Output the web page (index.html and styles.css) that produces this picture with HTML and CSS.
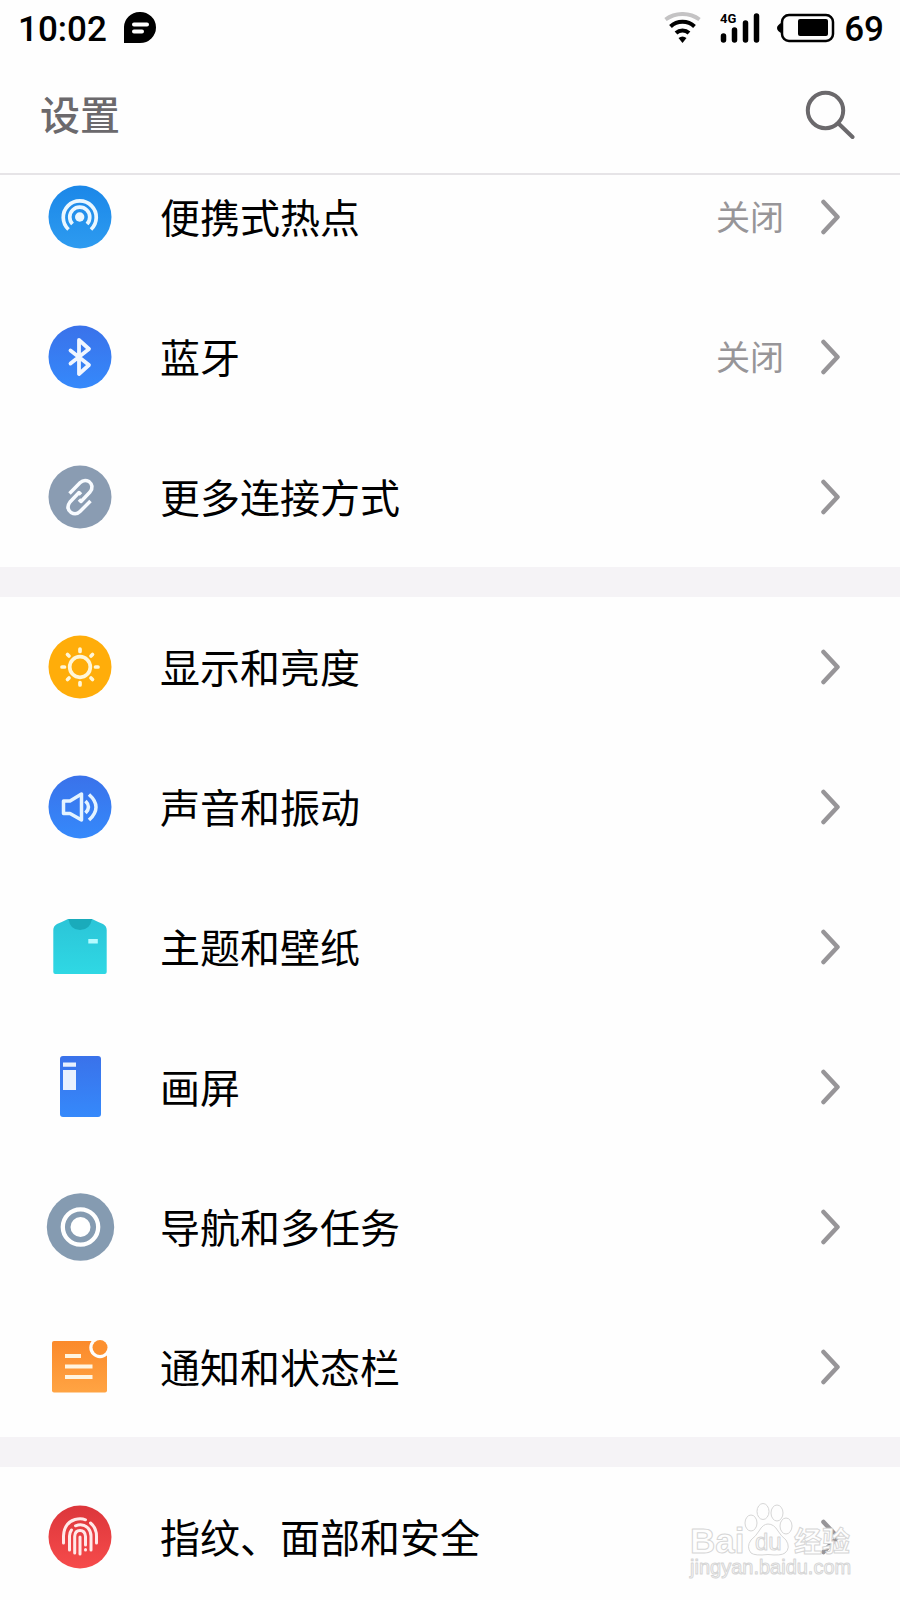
FILE: index.html
```html
<!DOCTYPE html>
<html lang="zh-CN">
<head>
    <meta charset="UTF-8">
    <meta name="viewport" content="width=device-width, initial-scale=1.0">
    <title>设置</title>
    <link rel="stylesheet" href="styles.css">
</head>
<body>

    <header class="header">
        <div class="status-bar">
            <span class="clock">10:02</span>
            <svg class="bubble" width="32" height="32" viewBox="0 0 32 32" aria-hidden="true">
                <path d="M0 31V16A16 15.500 0 1 1 16 31Z"/>
                <path d="M10 12.500h13M10 19.500h8" fill="none" stroke="#fff" stroke-width="4" stroke-linecap="round"/>
            </svg>
            <div class="status-icons">
                <svg width="38" height="32" viewBox="0 0 38 32" fill="none" stroke="#000" stroke-width="4" aria-hidden="true">
                    <path d="M1.500 7.500A29 29 0 0 1 35.500 7.500" stroke="#c4c3c4"/>
                    <path d="M6.500 14.500A17.500 17.500 0 0 1 30.500 14.500"/>
                    <path d="M12 21A9.500 9.500 0 0 1 25 21"/>
                    <path d="M14.500 26Q18.500 23 22.500 26L18.500 31Z" fill="#000" stroke="none"/>
                </svg>
                <svg class="signal" width="40" height="32" viewBox="0 0 40 32" aria-hidden="true">
                    <text class="network" x="0" y="11">4G</text>
                    <path d="M3.500 24v4M14.500 18v10M25.500 11v17M36.500 4v24" stroke="#000" stroke-width="5.500" stroke-linecap="round"/>
                </svg>
                <svg class="battery" width="58" height="32" viewBox="0 0 58 32" aria-hidden="true">
                    <path d="M5 10.500Q0 13 0 16t5 5.500Z"/>
                    <rect x="5" y="3" width="51" height="26" rx="7" fill="none" stroke="#000" stroke-width="2.500"/>
                    <rect x="21" y="7" width="30" height="17" rx="2"/>
                </svg>
                <span class="level">69</span>
            </div>
        </div>
        <div class="title-bar">
            <h1>设置</h1>
            <button class="search" type="button" aria-label="搜索">
                <svg width="50" height="50" viewBox="0 0 50 50" fill="none" stroke="#6b696c" stroke-width="4" stroke-linecap="round">
                    <circle cx="20.500" cy="20.500" r="17.700"/>
                    <path d="M34 34L47.500 47"/>
                </svg>
            </button>
        </div>
    </header>

    <!-- 图标共用的渐变和箭头 -->
    <svg class="defs" width="0" height="0" aria-hidden="true">
        <defs>
            <linearGradient id="sky" x2="0" y2="1"><stop stop-color="#1b87e8"/><stop offset="1" stop-color="#2d9bf0"/></linearGradient>
            <linearGradient id="blue" x2="0" y2="1"><stop stop-color="#3a72ea"/><stop offset="1" stop-color="#3589fb"/></linearGradient>
            <linearGradient id="teal" x2="0" y2="1"><stop stop-color="#2bc5d8"/><stop offset="1" stop-color="#2fd8e4"/></linearGradient>
            <linearGradient id="orange" x2="0" y2="1"><stop stop-color="#fb8a2b"/><stop offset="1" stop-color="#ffa443"/></linearGradient>
            <linearGradient id="red" x2="0" y2="1"><stop stop-color="#dc363b"/><stop offset="1" stop-color="#f64b4b"/></linearGradient>
            <symbol id="arrow" viewBox="0 0 20 36"><path d="M3.500 3L17.500 18L3.500 33" fill="none" stroke="#979598" stroke-width="4.500" stroke-linecap="round" stroke-linejoin="round"/></symbol>
        </defs>
    </svg>

    <main class="settings">
        <nav class="group">
            <a class="row" href="#hotspot">
                <svg class="icon" viewBox="0 0 64 64">
                    <circle cx="32" cy="32" r="31.500" fill="url(#sky)"/>
                    <g fill="none" stroke="#eaf7ff" stroke-width="3.700">
                        <path d="M20.500 44.500A16.500 16.500 0 1 1 43 44.500"/>
                        <path d="M24.500 39A10 10 0 1 1 39 39"/>
                    </g>
                    <circle cx="31.700" cy="32" r="4.700" fill="#eaf7ff"/>
                </svg>
                <span class="name">便携式热点</span>
                <span class="value">关闭</span>
                <svg class="arrow"><use href="#arrow"/></svg>
            </a>
            <a class="row" href="#bluetooth">
                <svg class="icon" viewBox="0 0 64 64">
                    <circle cx="32" cy="32" r="31.500" fill="url(#blue)"/>
                    <path d="M22.500 25.500L41 40L31 49V15L41 24L22.500 38.500" fill="none" stroke="#f0f6ff" stroke-width="3.800" stroke-linecap="round" stroke-linejoin="round"/>
                </svg>
                <span class="name">蓝牙</span>
                <span class="value">关闭</span>
                <svg class="arrow"><use href="#arrow"/></svg>
            </a>
            <a class="row" href="#connections">
                <svg class="icon" viewBox="0 0 64 64">
                    <circle cx="32" cy="32" r="31.500" fill="#8a9cb2"/>
                    <g fill="none" stroke="#f8fbff" stroke-width="3.500" stroke-linejoin="round">
                        <path d="M21.500 28.500L32 17.800Q36 13.800 41 16.500Q46.500 21 42 27L33 36.500L31 34.500"/>
                        <path d="M42.500 36L32 46.500Q28 50.500 23 47.500Q17.500 43 22 37L31 27.500L33 29.500"/>
                    </g>
                </svg>
                <span class="name">更多连接方式</span>
                <svg class="arrow"><use href="#arrow"/></svg>
            </a>
        </nav>

        <nav class="group">
            <a class="row" href="#display">
                <svg class="icon" viewBox="0 0 64 64">
                    <circle cx="32" cy="32" r="31.500" fill="#ffad0a"/>
                    <g fill="none" stroke="#fff6d8" stroke-width="3.700" stroke-linecap="round">
                        <circle cx="32" cy="32" r="10.300"/>
                        <path d="M32 14v2.500M32 47.500V50M14 32h2.500M47.500 32H50M19.500 19.500l1.500 1.500M43 43l1.500 1.500M19.500 44.500l1.500-1.500M43 21l1.500-1.500"/>
                    </g>
                </svg>
                <span class="name">显示和亮度</span>
                <svg class="arrow"><use href="#arrow"/></svg>
            </a>
            <a class="row" href="#sound">
                <svg class="icon" viewBox="0 0 64 64">
                    <circle cx="32" cy="32" r="31.500" fill="url(#blue)"/>
                    <g fill="none" stroke="#e4f3ff" stroke-width="3.500" stroke-linejoin="round">
                        <path d="M15.500 26H22L33.500 19V45L22 38.500H15.500Z"/>
                        <path d="M37.500 26Q43.500 32 37.500 38"/>
                        <path d="M41 19.500Q55 32 41 45"/>
                    </g>
                </svg>
                <span class="name">声音和振动</span>
                <svg class="arrow"><use href="#arrow"/></svg>
            </a>
            <a class="row" href="#theme">
                <svg class="icon" viewBox="0 0 64 64">
                    <path d="M20 4H44Q50 7 55 9Q58.700 11 58.700 15V57Q58.700 59 56.700 59H7.300Q5.300 59 5.300 57V15Q5.300 11 9 9Q14 7 20 4Z" fill="url(#teal)"/>
                    <path d="M20.500 4H44Q42 15 32 15T20.500 4Z" fill="#1aabbb"/>
                    <rect x="40.300" y="24" width="9.500" height="4.500" fill="#b4fbff"/>
                </svg>
                <span class="name">主题和壁纸</span>
                <svg class="arrow"><use href="#arrow"/></svg>
            </a>
            <a class="row" href="#screen">
                <svg class="icon" viewBox="0 0 64 64">
                    <rect x="12" y="1" width="41" height="61" rx="3" fill="url(#blue)"/>
                    <path d="M15 7.500H28V11.700H15ZM15 15H28V35H15Z" fill="#e8f1fe"/>
                </svg>
                <span class="name">画屏</span>
                <svg class="arrow"><use href="#arrow"/></svg>
            </a>
            <a class="row" href="#navigation">
                <svg class="icon" viewBox="0 0 64 64">
                    <circle cx="32.500" cy="32" r="33.700" fill="#859bb1"/>
                    <circle cx="32.500" cy="32" r="17.700" fill="none" stroke="#fff" stroke-width="4.300"/>
                    <circle cx="32.500" cy="32" r="10" fill="#fff"/>
                </svg>
                <span class="name">导航和多任务</span>
                <svg class="arrow"><use href="#arrow"/></svg>
            </a>
            <a class="row" href="#notifications">
                <svg class="icon" viewBox="0 0 64 64">
                    <rect x="4" y="6" width="55" height="51.500" rx="2" fill="url(#orange)"/>
                    <circle cx="52" cy="12.500" r="10.700" fill="#fefefe"/>
                    <circle cx="52" cy="12.500" r="7.500" fill="#fc902f"/>
                    <path d="M17 21H33M17 31.500H44.500M17 42H44.500" stroke="#fff4df" stroke-width="4"/>
                </svg>
                <span class="name">通知和状态栏</span>
                <svg class="arrow"><use href="#arrow"/></svg>
            </a>
        </nav>

        <nav class="group">
            <a class="row" href="#security">
                <svg class="icon" viewBox="0 0 64 64">
                    <circle cx="32" cy="32" r="31.500" fill="url(#red)"/>
                    <g fill="none" stroke="#ffe9e9" stroke-width="3" stroke-linecap="round">
                        <path d="M15.500 38V31Q16 18 27 14.500Q33 13 37.500 14.800"/>
                        <path d="M42.500 18Q48.500 23 48.500 31V38"/>
                        <path d="M21.500 45V31Q21.500 27.500 23.500 25"/>
                        <path d="M27.500 20.800Q35 18 40 23Q43 26.500 43 31V45"/>
                        <path d="M26.700 48V31.500Q27 25.500 32 25.500T37.500 31.500V40M37.500 44.500V45"/>
                        <path d="M32 32V49"/>
                    </g>
                </svg>
                <span class="name">指纹、面部和安全</span>
                <svg class="arrow"><use href="#arrow"/></svg>
            </a>
        </nav>
    </main>

    <svg class="watermark" width="166" height="84" viewBox="0 0 166 84" aria-hidden="true">
        <g class="outline">
            <text class="brand" x="2" y="55">Bai</text>
            <ellipse cx="63" cy="25" rx="6" ry="8"/>
            <ellipse cx="75" cy="13.500" rx="6" ry="8"/>
            <ellipse cx="89" cy="15" rx="6" ry="8"/>
            <ellipse cx="98" cy="28" rx="6" ry="8"/>
            <path d="M80 26Q86 26 90 33Q93 38 98 42Q103 50 97 55Q93 58 80 56.500Q67 58 63 55Q58 49 63 42Q68 38 71 33Q75 26 80 26Z"/>
            <text class="du" x="67" y="52">du</text>
            <text class="cjk" x="106" y="54">经验</text>
            <text class="site" x="2" y="76">jingyan.baidu.com</text>
        </g>
    </svg>

</body>
</html>
```
FILE: styles.css
```css
* { box-sizing: border-box; }
body { margin: 0; height: 100vh; display: flex; flex-direction: column; position: relative; overflow: hidden; background: #fefefe; color: #000; font-family: "Noto Sans CJK SC", sans-serif; }
svg { display: block; flex: none; }

/* 顶部 */
.header { flex: none; border-bottom: 2px solid #e6e4e7; }
.status-bar { display: flex; align-items: center; height: 56px; padding: 0 16px 0 18px; font-family: Roboto, sans-serif; font-size: 35px; font-weight: 500; line-height: 48px; }
.clock, .level { padding-top: 4px; }
.bubble { margin-left: 17px; }
.status-icons { display: flex; align-items: center; margin-left: auto; }
.signal { margin-left: 18px; }
.network { font-size: 13px; font-weight: 700; }
.battery { margin-left: 17px; }
.level { margin-left: 9px; }
.title-bar { display: flex; align-items: center; justify-content: space-between; height: 117px; padding: 0 45px 0 40px; }
h1 { margin: 0; padding-bottom: 4px; color: #6b696c; font-size: 40px; font-weight: 500; line-height: 60px; }
.search { padding: 0; border: none; background: none; cursor: pointer; }
.defs { position: absolute; }

/* 列表,向上滚动了一点 */
.settings { flex: 1; min-height: 0; overflow: hidden; }
.group:first-child { margin-top: -28px; }
.group + .group { border-top: 30px solid #f5f3f6; }
.row { display: flex; align-items: center; height: 140px; padding: 0 60px 0 48px; color: inherit; text-decoration: none; }
.icon { width: 64px; height: 64px; margin-right: 48px; overflow: visible; }
.name, .value { padding-bottom: 2px; line-height: 60px; }
.name { flex: 1; font-size: 40px; }
.value { margin-right: 36px; color: #979598; font-size: 34px; }
.arrow { width: 20px; height: 36px; }

/* 水印 */
.watermark { position: absolute; right: 46px; bottom: 18px; pointer-events: none; }
.outline { fill: #fefefe; stroke: #d6d6d6; stroke-width: 1px; stroke-linejoin: round; font-family: "Liberation Sans", sans-serif; }
.brand { font-size: 35px; font-weight: 700; }
.du { font-size: 24px; }
.cjk { font-family: "Noto Sans CJK SC", sans-serif; font-size: 28px; font-weight: 700; }
.site { font-size: 20px; }
```
